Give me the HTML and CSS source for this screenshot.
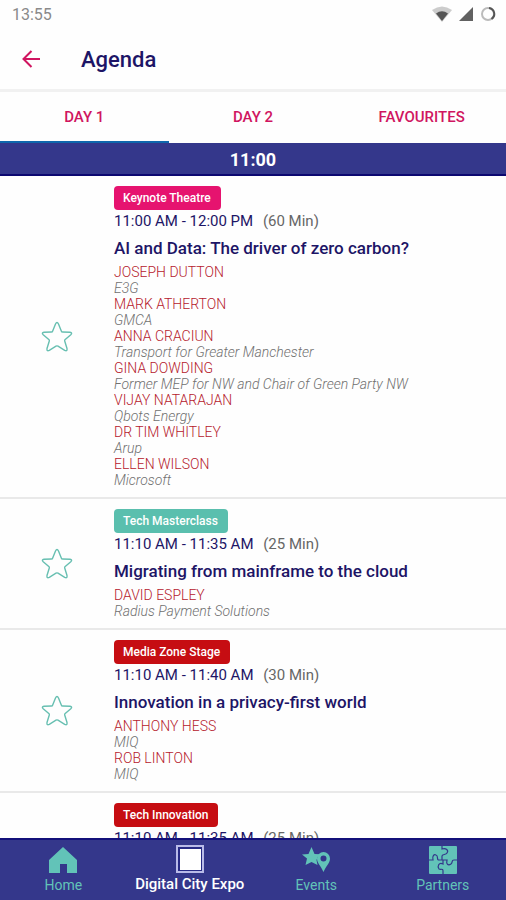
FILE: index.html
```html
<!DOCTYPE html>
<html lang="en">
<head>
<meta charset="utf-8">
<meta name="viewport" content="width=device-width, initial-scale=1">
<title>Agenda</title>
<link rel="stylesheet" href="styles.css">
</head>
<body>
<svg class="defs" aria-hidden="true">
  <symbol id="star" viewBox="0 0 32 32">
    <path d="M14.500 3Q16 0 17.500 3L20.300 10Q20.600 11 21.600 11L29 11.300Q31.800 11.800 29.800 13.800L24.200 18.500Q23.400 19.200 23.700 20L26 27.500Q26.500 30.600 23.700 29.300L17 25.200Q16 24.600 15 25.200L8.300 29.300Q5.500 30.600 6 27.500L8.300 20Q8.600 19.200 7.800 18.500L2.200 13.800Q.2 11.800 3 11.300L10.400 11Q11.400 11 11.700 10Z"/>
  </symbol>
</svg>
<div class="app">
  <div class="status">
    <span>13:55</span>
    <div class="status-icons">
      <svg width="20" height="16" viewBox="0 0 20 16"><path fill="#ccc" d="M0 4Q10-3 20 4L10 16Z"/><path fill="#555" d="M4 7.500Q10 3 16 7.500L10 15Z"/></svg>
      <svg width="16" height="16" viewBox="0 0 16 16"><path fill="#616161" d="M15 1V15H1Z"/></svg>
      <svg width="16" height="16" viewBox="0 0 16 16" fill="none" stroke-width="2"><circle cx="8" cy="8" r="6" stroke="#bbb"/><path stroke="#555" d="M9 2A6 6 0 0 1 11.500 13"/></svg>
    </div>
  </div>
  <header class="bar">
    <button class="back" aria-label="Back"><svg width="20" height="20" viewBox="0 0 20 20" fill="none" stroke="#d01560" stroke-width="2"><path d="M19 9H3M10.500 1L2.500 9L10.500 17"/></svg></button>
    <h1>Agenda</h1>
  </header>
  <nav class="tabs" aria-label="Days">
    <button class="tab active">DAY 1</button>
    <button class="tab">DAY 2</button>
    <button class="tab">FAVOURITES</button>
  </nav>
  <main class="list">
    <h2 class="hour">11:00</h2>
    <article class="session">
      <button class="fav" aria-label="Add to favourites"><svg><use href="#star"/></svg></button>
      <div class="info">
        <span class="badge pink">Keynote Theatre</span>
        <p class="time">11:00 AM - 12:00 PM <span>(60 Min)</span></p>
        <h3>AI and Data: The driver of zero carbon?</h3>
        <dl>
          <dt>JOSEPH DUTTON</dt><dd>E3G</dd>
          <dt>MARK ATHERTON</dt><dd>GMCA</dd>
          <dt>ANNA CRACIUN</dt><dd>Transport for Greater Manchester</dd>
          <dt>GINA DOWDING</dt><dd>Former MEP for NW and Chair of Green Party NW</dd>
          <dt>VIJAY NATARAJAN</dt><dd>Qbots Energy</dd>
          <dt>DR TIM WHITLEY</dt><dd>Arup</dd>
          <dt>ELLEN WILSON</dt><dd>Microsoft</dd>
        </dl>
      </div>
    </article>
    <article class="session">
      <button class="fav" aria-label="Add to favourites"><svg><use href="#star"/></svg></button>
      <div class="info">
        <span class="badge teal">Tech Masterclass</span>
        <p class="time">11:10 AM - 11:35 AM <span>(25 Min)</span></p>
        <h3>Migrating from mainframe to the cloud</h3>
        <dl><dt>DAVID ESPLEY</dt><dd>Radius Payment Solutions</dd></dl>
      </div>
    </article>
    <article class="session">
      <button class="fav" aria-label="Add to favourites"><svg><use href="#star"/></svg></button>
      <div class="info">
        <span class="badge red">Media Zone Stage</span>
        <p class="time">11:10 AM - 11:40 AM <span>(30 Min)</span></p>
        <h3>Innovation in a privacy-first world</h3>
        <dl>
          <dt>ANTHONY HESS</dt><dd>MIQ</dd>
          <dt>ROB LINTON</dt><dd>MIQ</dd>
        </dl>
      </div>
    </article>
    <article class="session">
      <div></div>
      <div class="info">
        <span class="badge red">Tech Innovation</span>
        <p class="time">11:10 AM - 11:35 AM <span>(25 Min)</span></p>
      </div>
    </article>
  </main>
  <nav class="bottom" aria-label="Main">
    <a href="#home"><svg viewBox="0 0 28 28"><path fill="currentColor" d="M14 1L28 14V27H18V18H11V27H0V14Z"/></svg>Home</a>
    <a href="#expo" class="current"><svg viewBox="0 0 28 28"><path fill="#b9bbe8" d="M0 0H28V28H0Z"/><path fill="#272a85" d="M2 2H26V26H2Z"/><path fill="#fff" d="M4 4H25V25H4Z"/></svg>Digital City Expo</a>
    <a href="#events"><svg viewBox="0 0 28 28" fill="currentColor"><path d="M9.500 1L12.500 8L18 8.300Q15 11 14.500 14L15.500 19L9.500 16L3.500 19L5 12.500L0 8.500L6.500 8Z"/><path fill-rule="evenodd" d="M21.500 6A6.500 6.500 0 0 1 28 12.500C28 17 24 20 21.500 26C19 20 15 17 15 12.500A6.500 6.500 0 0 1 21.500 6ZM21.500 9.500A3 3 0 1 0 21.500 15.500A3 3 0 1 0 21.500 9.500Z"/></svg>Events</a>
    <a href="#partners"><svg viewBox="0 0 28 28"><rect width="28" height="28" rx="1" fill="currentColor"/><path fill="none" stroke="#34378b" stroke-width="1.200" d="M13 0V3C17 2 20 4 18 7C17 9 13 8 13 10V14M0 14H4C3 10 5 8 7 9C10 10 7 14 10 14H18C17 18 19 20 22 18C24 17 22 14 25 14H28M14 14V18C10 16 8 20 10 23C12 24 14 22 14 25V28"/></svg>Partners</a>
  </nav>
</div>
</body>
</html>
```
FILE: styles.css
```css
* { box-sizing: border-box; }
body, h1, h2, h3, p, dl, dd { margin: 0; }
body { font-family: Roboto, "Liberation Sans", sans-serif; background: #fefefe; color: #1d1566; }
button { border: 0; padding: 0; background: none; font: inherit; color: inherit; cursor: pointer; }
.defs { display: none; }
.app { display: flex; flex-direction: column; height: 100vh; }

.status { display: flex; justify-content: space-between; align-items: center; height: 28px; padding: 0 10px 0 12px; font-size: 16px; color: #8a8a8a; }
.status-icons { display: flex; align-items: center; gap: 6px; }
.status-icons svg { display: block; }

.bar { display: flex; align-items: center; gap: 40px; height: 64px; padding: 2px 21px 0; border-bottom: 3px solid #f1f1f1; }
.back svg { display: block; }
h1 { font-size: 22px; font-weight: 500; }

.tabs { display: grid; grid-template-columns: repeat(3, 1fr); height: 51px; }
.tab { border-bottom: 2px solid transparent; font-size: 15px; font-weight: 500; color: #d01560; }
.tab.active { border-color: #0f67ad; }

.list { flex: 1; min-height: 0; overflow: hidden; }
.hour { padding-top: 3px; background: #34378b; border-bottom: 2px solid #0c0870; color: #fff; font-size: 18px; font-weight: 700; line-height: 28px; text-align: center; }
.session { display: grid; grid-template-columns: 114px 1fr; padding: 10px 0 9px; border-bottom: 2px solid #e9e9e9; }
.fav { display: grid; place-items: center; }
.fav svg { width: 32px; height: 32px; fill: none; stroke: #67bfb1; stroke-width: 1.4; }
.badge { display: block; width: fit-content; padding: 0 10px 0 9px; border-radius: 4px; color: #fff; font-size: 12px; font-weight: 500; line-height: 24px; }
.pink { background: #e6136f; }
.teal { background: #5abfae; }
.red { background: #c60d12; }
.time { font-size: 15px; font-weight: 400; line-height: 22px; }
.time span { margin-left: 6px; color: #666; }
h3 { font-size: 17px; font-weight: 500; line-height: 32px; }
dl { font-size: 14px; font-weight: 300; line-height: 16px; }
dt { color: #b5202c; }
dd { color: #707070; font-style: italic; }

.bottom { display: grid; grid-template-columns: repeat(4, 1fr); height: 62px; background: #34378b; border-top: 2px solid #13107a; }
.bottom a { display: flex; flex-direction: column; align-items: center; gap: 2px; padding-top: 6px; color: #62c3b8; font-size: 14px; line-height: 18px; text-decoration: none; white-space: nowrap; }
.bottom svg { width: 28px; height: 28px; }
.bottom .current { color: #fff; font-size: 15px; font-weight: 500; padding-top: 5px; }
```
